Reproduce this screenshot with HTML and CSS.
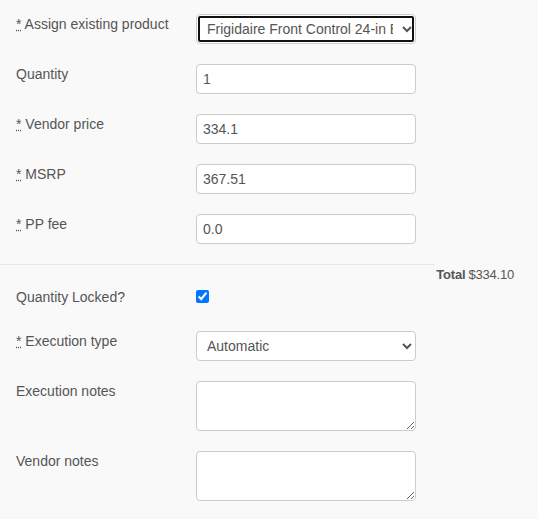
FILE: index.html
```html
<!DOCTYPE html>
<html lang="en">
<head>
<meta charset="utf-8">
<title>Product line</title>
<link rel="stylesheet" href="styles.css">
</head>
<body>
<form class="form">
  <div class="section">
    <div class="row">
      <label class="label"><abbr title="required">*</abbr> Assign existing product</label>
      <select class="control select focused">
        <option>Frigidaire Front Control 24-in Built-In Dishwasher</option>
      </select>
    </div>
    <div class="row">
      <label class="label">Quantity</label>
      <input class="control input" type="text" value="1">
    </div>
    <div class="row">
      <label class="label"><abbr title="required">*</abbr> Vendor price</label>
      <input class="control input" type="text" value="334.1">
    </div>
    <div class="row">
      <label class="label"><abbr title="required">*</abbr> MSRP</label>
      <input class="control input" type="text" value="367.51">
    </div>
    <div class="row">
      <label class="label"><abbr title="required">*</abbr> PP fee</label>
      <input class="control input" type="text" value="0.0">
    </div>
  </div>
  <div class="divider"></div>
  <div class="total"><strong class="total-label">Total</strong><span class="total-value">$334.10</span></div>
  <div class="section">
    <div class="row row-check">
      <label class="label">Quantity Locked?</label>
      <input class="check" type="checkbox" checked>
    </div>
    <div class="row">
      <label class="label"><abbr title="required">*</abbr> Execution type</label>
      <select class="control select">
        <option>Automatic</option>
        <option>Manual</option>
      </select>
    </div>
    <div class="row">
      <label class="label">Execution notes</label>
      <textarea class="control textarea"></textarea>
    </div>
    <div class="row">
      <label class="label">Vendor notes</label>
      <textarea class="control textarea"></textarea>
    </div>
  </div>
</form>
</body>
</html>
```

FILE: styles.css
```css
html, body {
  margin: 0;
  padding: 0;
}

body {
  background: #f9f9f9;
  font-family: "Liberation Sans", Arial, sans-serif;
  font-size: 14px;
  line-height: 20px;
  color: #555;
}

.form {
  padding-top: 14px;
}

.section {
  display: flex;
  flex-direction: column;
  gap: 20px;
  padding-left: 16px;
}

.row {
  display: flex;
  align-items: flex-start;
}

.label {
  flex: 0 0 180px;
  line-height: 20px;
}

abbr[title] {
  text-decoration: underline dotted;
  cursor: help;
}

.control {
  box-sizing: border-box;
  width: 220px;
  height: 30px;
  margin: 0;
  border: 1px solid #ccc;
  border-radius: 4px;
  background: #fff;
  font-family: "Liberation Sans", Arial, sans-serif;
  font-size: 14px;
  color: #555;
}

.input {
  padding: 0 6px;
}

.select {
  padding: 0 6px 0 6px;
}

.focused {
  outline: 2px solid #111;
  outline-offset: -4px;
}

.textarea {
  height: 50px;
  padding: 6px;
  resize: vertical;
}

.divider {
  margin-top: 20px;
  width: 435px;
  border-top: 1px solid #e6e6e6;
}

.total {
  display: flex;
  justify-content: flex-end;
  gap: 3px;
  padding: 2px 24px 0 0;
  height: 20px;
  font-size: 13px;
  line-height: 16px;
  letter-spacing: -0.2px;
}

.total-label {
  font-weight: bold;
}

.row-check {
  height: 24px;
}

.check {
  margin: 3px 0 0 0;
  width: 13px;
  height: 13px;
}
```
